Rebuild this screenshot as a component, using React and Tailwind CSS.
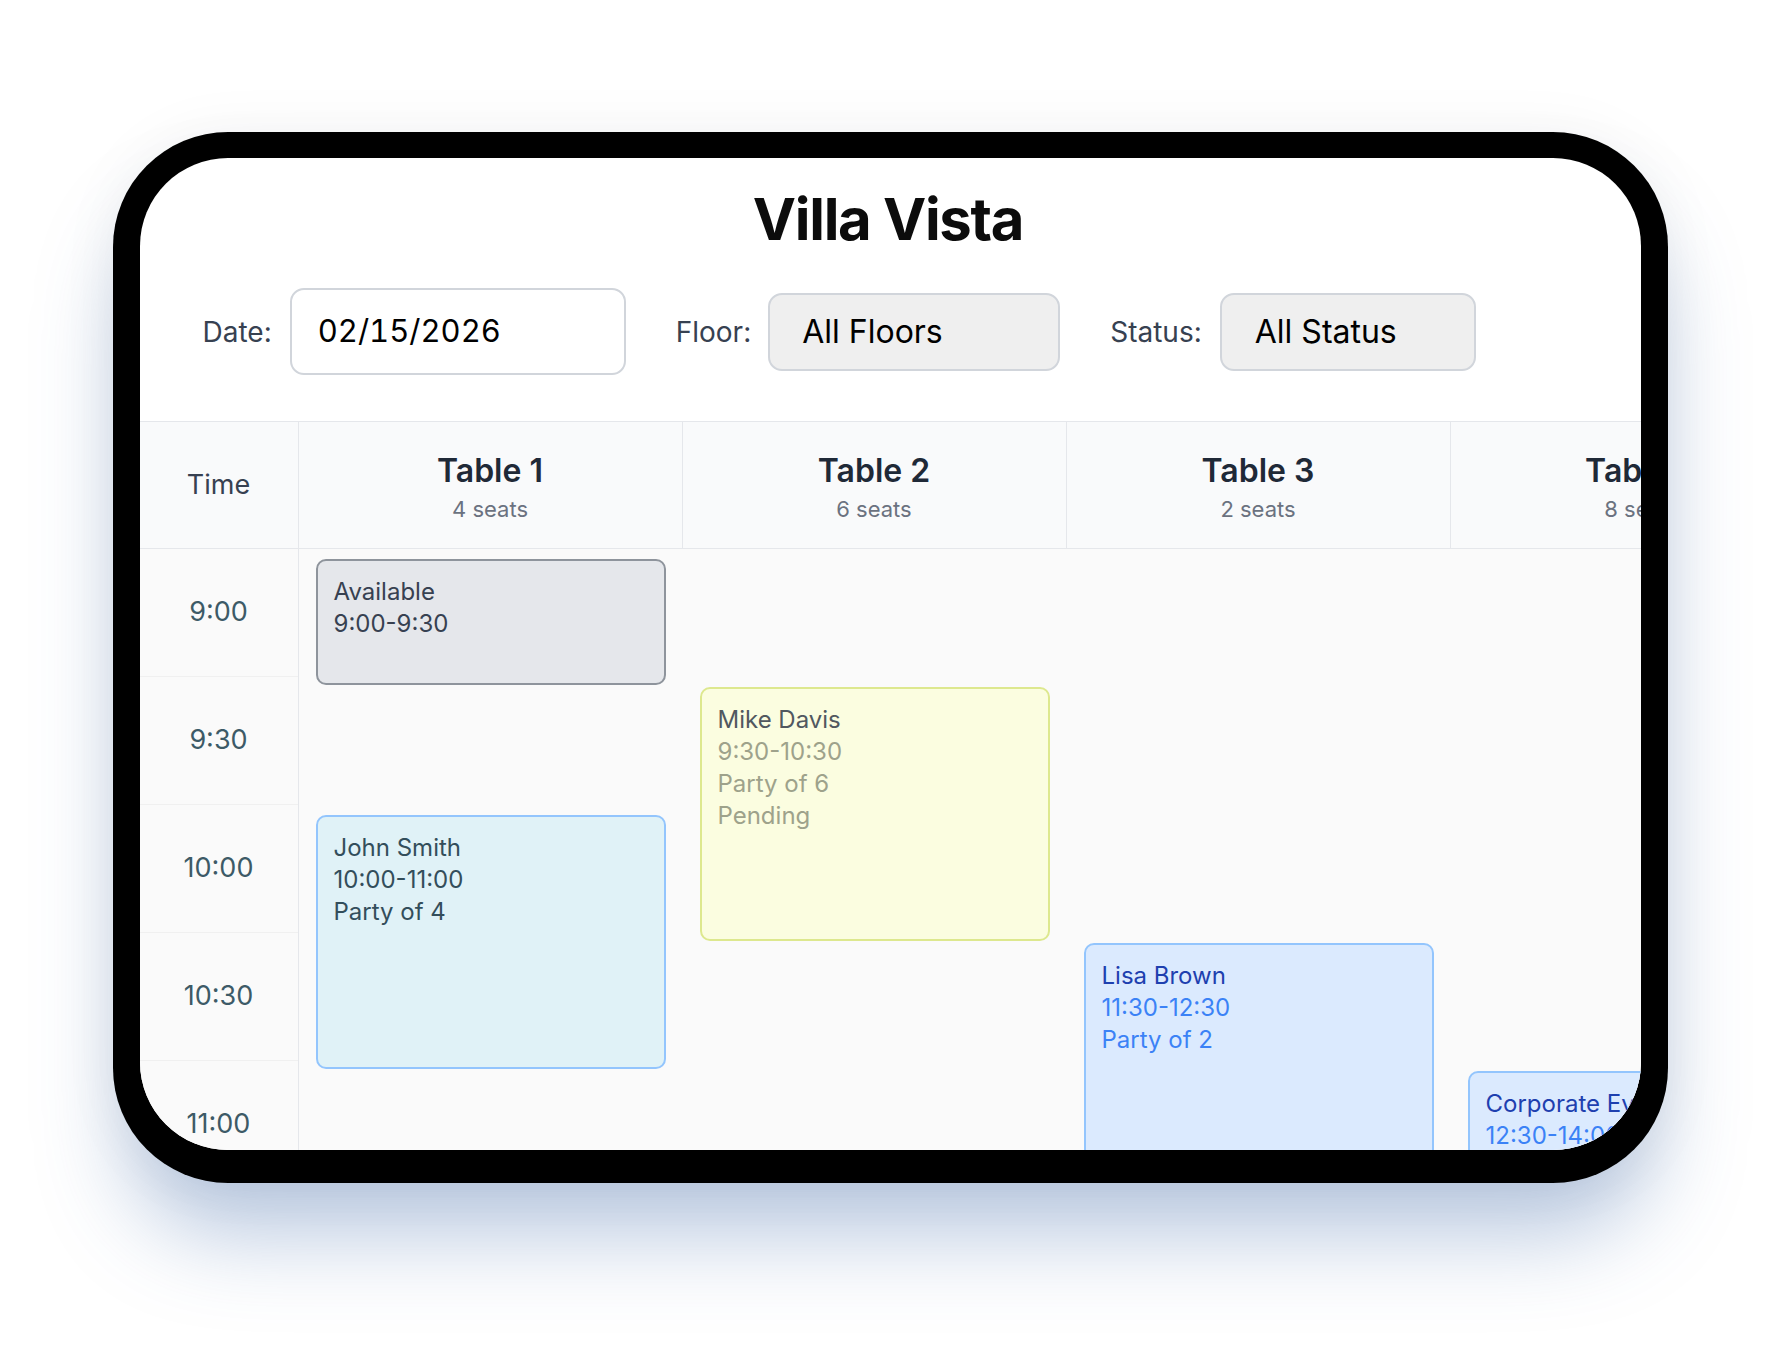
import React from 'react';

const tables = [
    { name: 'Table 1', seats: 4 },
    { name: 'Table 2', seats: 6 },
    { name: 'Table 3', seats: 2 },
    { name: 'Table 4', seats: 8 },
    { name: 'Table 5', seats: 4 },
];

const times = ['9:00', '9:30', '10:00', '10:30', '11:00', '11:30'];

// slot = row index the block starts on, span = number of half-hour rows
const events = {
    0: [
        { slot: 0, span: 1, lines: ['Available', '9:00-9:30'], kind: 'available' },
        { slot: 2, span: 2, lines: ['John Smith', '10:00-11:00', 'Party of 4'], kind: 'confirmed' },
    ],
    1: [
        { slot: 1, span: 2, lines: ['Mike Davis', '9:30-10:30', 'Party of 6', 'Pending'], kind: 'pending' },
    ],
    2: [
        { slot: 3, span: 2, lines: ['Lisa Brown', '11:30-12:30', 'Party of 2'], kind: 'booked' },
    ],
    3: [
        { slot: 4, span: 3, lines: ['Corporate Event', '12:30-14:00', 'Party of 8'], kind: 'booked' },
    ],
};

const styles = {
    available: { box: 'bg-[#e5e7eb] border-[#8e949c]', first: 'text-[#374151]', rest: 'text-[#374151]' },
    confirmed: { box: 'bg-[#e0f2f7] border-[#93c5fd]', first: 'text-[#334e5b]', rest: 'text-[#334e5b]' },
    pending: { box: 'bg-[#fbfde0] border-[#dde88e]', first: 'text-[#51585f]', rest: 'text-[#9ea28b]' },
    booked: { box: 'bg-[#dbeafe] border-[#93c5fd]', first: 'text-[#1e40af]', rest: 'text-[#3b82f6]' },
};

const ROW = 128;

function EventBlock({ ev }) {
    const s = styles[ev.kind];
    return (
        <div
            className={`absolute left-[17px] right-[17px] rounded-[10px] border-2 pt-[15px] px-4 overflow-hidden ${s.box}`}
            style={{ top: ev.slot * ROW + 10, height: ev.span * ROW - 2 }}
        >
            {ev.lines.map((l, i) => (
                <div key={i} className={`text-[24px] leading-[32px] whitespace-nowrap ${i === 0 ? s.first : s.rest}`}>
                    {l}
                </div>
            ))}
        </div>
    );
}

export default function App() {
    return (
        <div className="w-full h-[1362px] bg-white flex justify-center pt-[132px] font-['Inter','Noto_Sans',sans-serif] overflow-hidden">
            <div className="w-[1555px] h-[1051px] bg-black rounded-[115px] pt-[26px] px-[27px] pb-[33px] shadow-[0_65px_90px_-15px_rgba(55,100,165,0.36),0_0_60px_rgba(0,0,0,0.05)]">
                <div className="w-full h-full bg-white rounded-[88px] overflow-hidden flex flex-col">
                    {/* heading + filters */}
                    <div className="pt-[26px] px-[63px] pb-[46px]">
                        <h1 className="text-center text-[58px] leading-[70px] font-bold tracking-[-1.3px] text-[#0c0c0c] pr-[4px]">Villa Vista</h1>
                        <div className="mt-[34px] flex items-center gap-[50px]">
                            <div className="flex items-center gap-[18px]">
                                <span className="text-[28px] text-[#374151]">Date:</span>
                                <div className="w-[336px] h-[87px] border-2 border-[#d1d5db] rounded-[14px] bg-white flex items-center px-[26px] text-[31px] tabular-nums text-black">
                                    02/15/2026
                                </div>
                            </div>
                            <div className="flex items-center gap-[17px]">
                                <span className="text-[28px] text-[#374151]">Floor:</span>
                                <div className="w-[292px] h-[78px] border-2 border-[#d1d5db] rounded-[14px] bg-[#efefef] flex items-center px-[32px] text-[32px] text-black">
                                    All Floors
                                </div>
                            </div>
                            <div className="flex items-center gap-[18px]">
                                <span className="text-[28px] text-[#374151]">Status:</span>
                                <div className="w-[256px] h-[78px] border-2 border-[#d1d5db] rounded-[14px] bg-[#efefef] flex items-center px-[33px] text-[32px] text-black">
                                    All Status
                                </div>
                            </div>
                        </div>
                    </div>

                    {/* schedule grid */}
                    <div className="flex-1 min-h-0 bg-[#fafafa]">
                        <div className="flex w-max bg-[#f9fafb] border-y border-[#e5e7eb] h-[128px]">
                            <div className="w-[159px] shrink-0 border-r border-[#e5e7eb] flex items-center justify-center text-[27px] text-[#374151]">
                                Time
                            </div>
                            {tables.map(t => (
                                <div key={t.name} className="w-[384px] shrink-0 border-r border-[#e5e7eb] flex flex-col items-center justify-center pt-[5px]">
                                    <div className="text-[32px] leading-[38px] font-semibold text-[#1f2937]">{t.name}</div>
                                    <div className="mt-[4px] text-[22px] leading-[30px] text-[#6b7280]">{t.seats} seats</div>
                                </div>
                            ))}
                        </div>
                        <div className="flex w-max">
                            <div className="w-[159px] shrink-0 border-r border-[#e5e7eb]">
                                {times.map(t => (
                                    <div key={t} className="h-[128px] border-b border-[#f0f0f0] flex items-center justify-center text-[27px] text-[#3d5a67]">
                                        {t}
                                    </div>
                                ))}
                            </div>
                            {tables.map((t, ci) => (
                                <div key={t.name} className="relative w-[384px] shrink-0" style={{ height: times.length * ROW }}>
                                    {(events[ci] || []).map((ev, i) => (
                                        <EventBlock key={i} ev={ev} />
                                    ))}
                                </div>
                            ))}
                        </div>
                    </div>
                </div>
            </div>
        </div>
    );
}
